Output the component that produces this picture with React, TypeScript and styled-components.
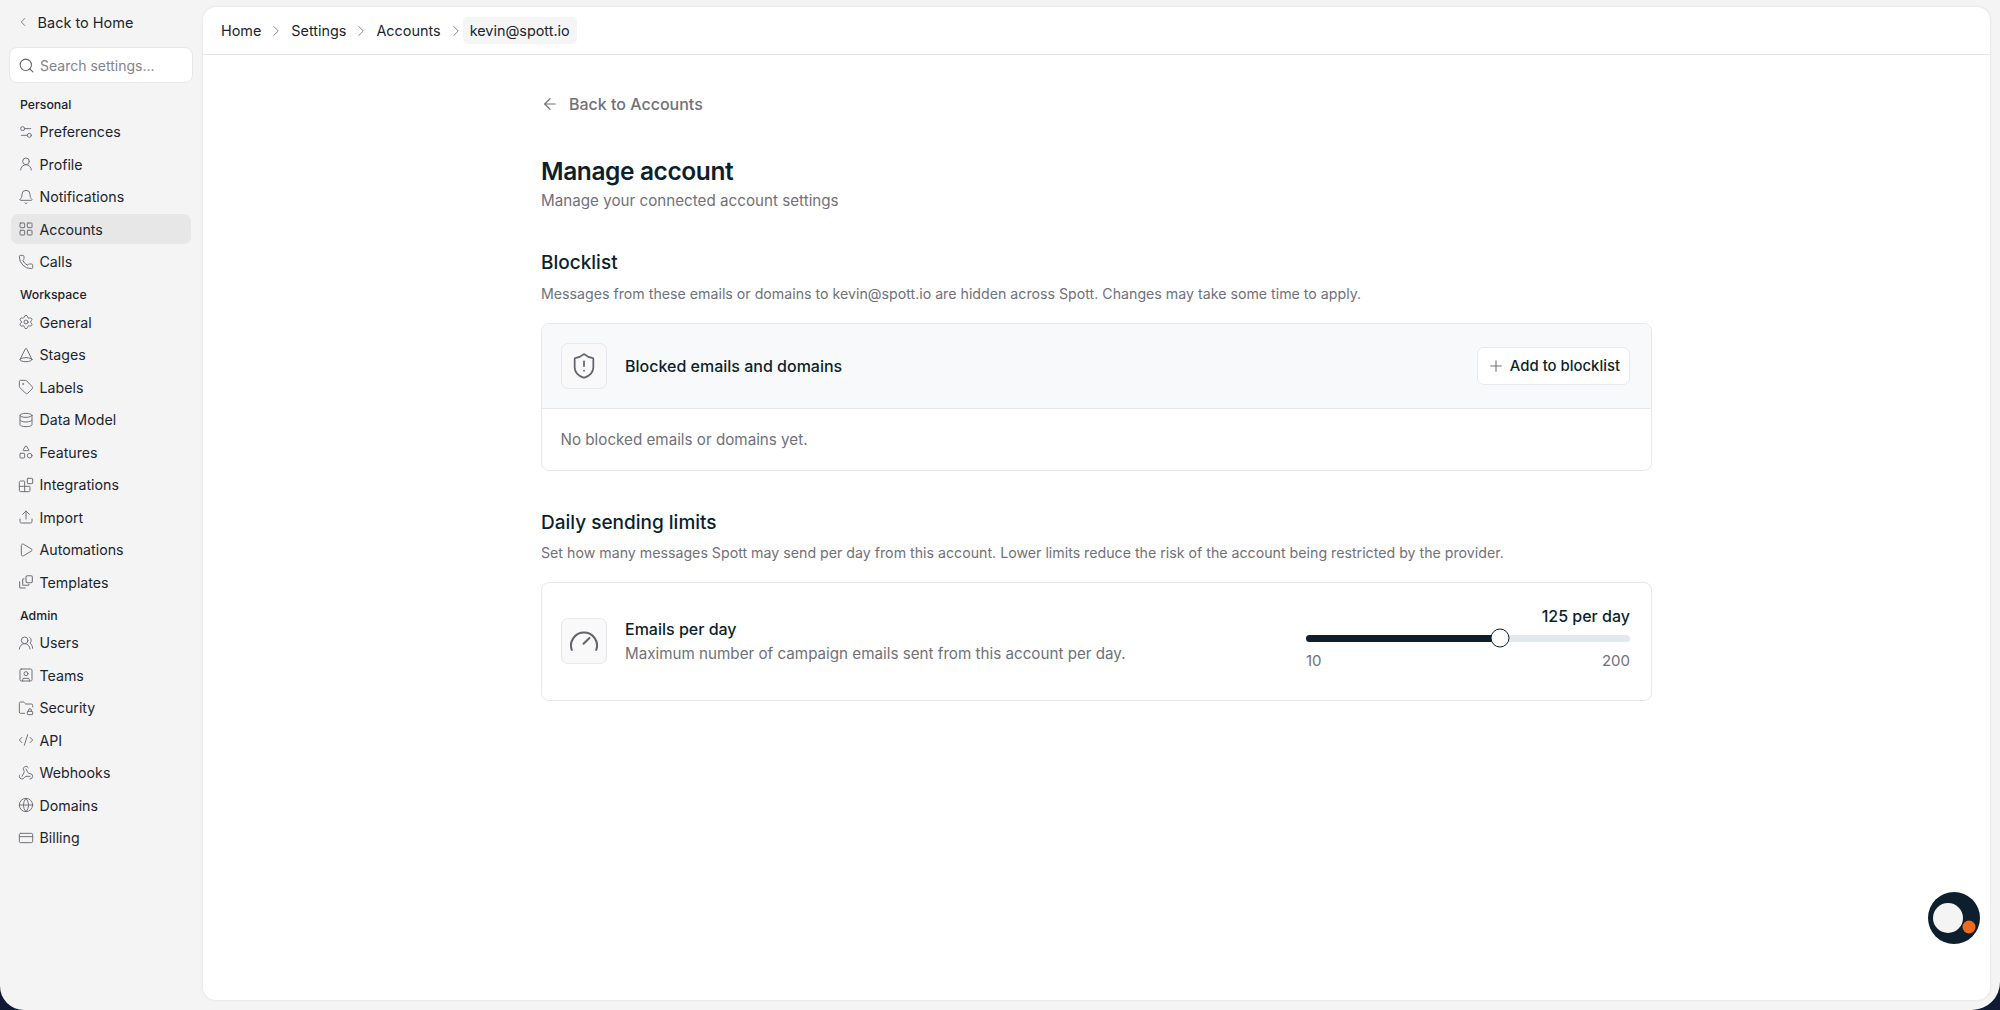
import { Fragment, ReactNode } from "react";
import styled, { createGlobalStyle } from "styled-components";
import {
  ArrowLeft,
  Bell,
  Blocks,
  ChevronLeft,
  ChevronRight,
  CodeXml,
  Cone,
  CreditCard,
  Database,
  FolderLock,
  Globe,
  LayoutGrid,
  Phone,
  Play,
  Plus,
  Search,
  Settings,
  Settings2,
  Shapes,
  ShieldAlert,
  SquareUser,
  Tag,
  Upload,
  UserRound,
  UsersRound,
  Webhook,
} from "lucide-react";

const GlobalStyle = createGlobalStyle`
  html, body {
    margin: 0;
    padding: 0;
    background: #101a33;
  }
  * {
    box-sizing: border-box;
  }
  body {
    font-family: Inter, "Liberation Sans", sans-serif;
    color: #1b2530;
    -webkit-font-smoothing: antialiased;
  }
`;

const Shell = styled.div`
  display: flex;
  width: 2000px;
  height: 1010px;
  overflow: hidden;
  background: #f4f4f5;
  border-radius: 0 0 28px 24px;
`;

const Sidebar = styled.aside`
  display: flex;
  flex-direction: column;
  width: 203px;
  flex-shrink: 0;
  padding: 12px 10px 0 9px;
`;

const BackHome = styled.div`
  display: flex;
  align-items: center;
  gap: 8px;
  height: 20px;
  padding-left: 6.5px;
  font-size: 14.5px;
  color: #1b2530;
  svg {
    color: #71717a;
  }
`;

const SearchBox = styled.div`
  display: flex;
  align-items: center;
  gap: 5px;
  height: 36px;
  margin: 15px 0 5.5px;
  padding-left: 8px;
  background: #fff;
  border: 1px solid #e7e7e9;
  border-radius: 8px;
  font-size: 14px;
  color: #83838b;
  svg {
    color: #63636b;
  }
`;

const NavList = styled.nav`
  display: flex;
  flex-direction: column;
  gap: 2.5px;
  margin: 0 2px 0 2px;
`;

const NavLabel = styled.div`
  height: 25.5px;
  padding: 6px 0 0 9px;
  font-size: 12.3px;
  line-height: 19.5px;
  font-weight: 500;
  color: #1b2530;
`;

const NavRow = styled.div<{ $active?: boolean }>`
  display: flex;
  align-items: center;
  gap: 6px;
  height: 30px;
  padding-left: 6.5px;
  border-radius: 7px;
  font-size: 14.2px;
  color: #1b2530;
  background: ${(props) => (props.$active ? "#e7e7e8" : "transparent")};
  svg {
    flex-shrink: 0;
    color: #71717a;
  }
`;

const Panel = styled.main`
  display: flex;
  flex-direction: column;
  flex: 1;
  margin: 7px 10px 10px 0;
  background: #fff;
  border-radius: 13px;
  box-shadow: 0 0 3px rgba(0, 0, 0, 0.1);
`;

const TopBar = styled.header`
  display: flex;
  align-items: center;
  height: 48px;
  padding-left: 18px;
  border-bottom: 1px solid #e6e6e8;
`;

const Crumb = styled.span<{ $current?: boolean }>`
  margin-left: ${(props) => (props.$current ? "-8px" : "0")};
  padding: ${(props) => (props.$current ? "5px 7px" : "0")};
  border-radius: 5px;
  font-size: 14.4px;
  color: #1b2530;
  background: ${(props) => (props.$current ? "#f5f5f6" : "transparent")};
`;

const CrumbSep = styled.span`
  display: flex;
  margin: 0 6px;
  color: #85858c;
`;

const Content = styled.div`
  width: 1111px;
  margin: 0 auto;
  padding-top: 37px;
`;

const BackLink = styled.div`
  display: flex;
  align-items: center;
  gap: 10px;
  height: 24px;
  font-size: 16px;
  font-weight: 500;
  color: #71717a;
`;

const Title = styled.h1`
  margin: 37.5px 0 0;
  font-size: 24.5px;
  line-height: 34px;
  font-weight: 600;
  letter-spacing: -0.4px;
  color: #0d1f2d;
`;

const Subtitle = styled.p`
  margin: 2px 0 0;
  font-size: 15.2px;
  line-height: 22px;
  color: #71717a;
`;

const Section = styled.section<{ $gap: number }>`
  margin-top: ${(props) => props.$gap}px;
`;

const SectionTitle = styled.h2`
  margin: 0;
  font-size: 19px;
  line-height: 26px;
  font-weight: 500;
  color: #0d1f2d;
`;

const SectionText = styled.p`
  margin: 6.5px 0 0;
  font-size: 14.2px;
  line-height: 22px;
  color: #71717a;
`;

const Card = styled.div<{ $top: number }>`
  margin-top: ${(props) => props.$top}px;
  border: 1px solid #e6e8eb;
  border-radius: 8px;
  overflow: hidden;
`;

const CardHeader = styled.div`
  display: flex;
  align-items: center;
  justify-content: space-between;
  height: 85px;
  padding: 0 21px 0 19px;
  background: #f8f9fa;
  border-bottom: 1px solid #e6e8eb;
`;

const CardLead = styled.div`
  display: flex;
  align-items: center;
  gap: 18px;
`;

const IconBox = styled.div`
  display: flex;
  align-items: center;
  justify-content: center;
  width: 46px;
  height: 46px;
  background: #f9f9fa;
  border: 1px solid #e6e8eb;
  border-radius: 7px;
  color: #63636b;
`;

const CardTitle = styled.div`
  font-size: 16px;
  line-height: 24px;
  font-weight: 500;
  color: #0d1f2d;
`;

const AddButton = styled.button`
  display: flex;
  align-items: center;
  gap: 4.5px;
  height: 38px;
  padding: 0 9px;
  background: #fff;
  border: 1px solid #e6e8eb;
  border-radius: 7px;
  font-family: inherit;
  font-size: 14.9px;
  font-weight: 500;
  color: #0d1f2d;
  svg {
    color: #71717a;
  }
`;

const CardEmpty = styled.div`
  height: 61px;
  padding: 20px 0 0 18.5px;
  font-size: 15.2px;
  line-height: 22px;
  color: #71717a;
`;

const LimitRow = styled.div`
  display: flex;
  align-items: center;
  justify-content: space-between;
  height: 117px;
  padding: 0 21px 0 19px;
`;

const LimitText = styled.div`
  display: flex;
  flex-direction: column;
  gap: 1px;
`;

const LimitHint = styled.div`
  font-size: 15.2px;
  line-height: 24px;
  color: #71717a;
`;

const SliderWrap = styled.div`
  display: flex;
  flex-direction: column;
  width: 324px;
  padding-bottom: 7px;
`;

const SliderValue = styled.div`
  text-align: right;
  font-size: 16px;
  line-height: 24px;
  font-weight: 500;
  color: #0d1f2d;
`;

const SliderTrack = styled.div`
  position: relative;
  height: 7px;
  margin-top: 7px;
  background: #e2e8f0;
  border-radius: 4px;
`;

const SliderFill = styled.div`
  height: 100%;
  background: #0d1f2d;
  border-radius: 4px;
`;

const SliderThumb = styled.div`
  position: absolute;
  top: 50%;
  width: 19px;
  height: 19px;
  background: #fff;
  border: 1.5px solid #0d1f2d;
  border-radius: 50%;
  transform: translate(-50%, -50%);
`;

const SliderScale = styled.div`
  display: flex;
  justify-content: space-between;
  margin-top: 8px;
  font-size: 15px;
  line-height: 22px;
  color: #71717a;
`;

const ChatBubble = styled.svg`
  position: fixed;
  left: 1928px;
  top: 892px;
`;

const GaugeIcon = () => (
  <svg width="28" height="28" viewBox="0 0 28 28" fill="none" stroke="currentColor" strokeWidth="2" strokeLinecap="round">
    <path d="M1.8 23A13 13 0 1 1 26.2 23" />
    <path d="M13.5 16.7L19.5 11" />
  </svg>
);

const TemplatesIcon = () => (
  <svg width="16" height="16" viewBox="0 0 24 24" fill="none" stroke="currentColor" strokeWidth="1.6" strokeLinecap="round" strokeLinejoin="round">
    <rect x="12" y="2.5" width="9.5" height="10.5" rx="2" />
    <path d="M9 7H8.5A1.5 1.5 0 0 0 7 8.5v7A1.5 1.5 0 0 0 8.5 17H15a1.5 1.5 0 0 0 1.5-1.5" />
    <path d="M2.5 11.5v8A1.5 1.5 0 0 0 4 21h7" />
  </svg>
);

const ic = { size: 16, strokeWidth: 1.5 };

type NavEntry = { label: string; icon: ReactNode; active?: boolean };
type NavGroup = { title: string; items: NavEntry[] };

const groups: NavGroup[] = [
  {
    title: "Personal",
    items: [
      { label: "Preferences", icon: <Settings2 {...ic} /> },
      { label: "Profile", icon: <UserRound {...ic} /> },
      { label: "Notifications", icon: <Bell {...ic} /> },
      { label: "Accounts", icon: <LayoutGrid {...ic} />, active: true },
      { label: "Calls", icon: <Phone {...ic} /> },
    ],
  },
  {
    title: "Workspace",
    items: [
      { label: "General", icon: <Settings {...ic} /> },
      { label: "Stages", icon: <Cone {...ic} /> },
      { label: "Labels", icon: <Tag {...ic} /> },
      { label: "Data Model", icon: <Database {...ic} /> },
      { label: "Features", icon: <Shapes {...ic} /> },
      { label: "Integrations", icon: <Blocks {...ic} /> },
      { label: "Import", icon: <Upload {...ic} /> },
      { label: "Automations", icon: <Play {...ic} /> },
      { label: "Templates", icon: <TemplatesIcon /> },
    ],
  },
  {
    title: "Admin",
    items: [
      { label: "Users", icon: <UsersRound {...ic} /> },
      { label: "Teams", icon: <SquareUser {...ic} /> },
      { label: "Security", icon: <FolderLock {...ic} /> },
      { label: "API", icon: <CodeXml {...ic} /> },
      { label: "Webhooks", icon: <Webhook {...ic} /> },
      { label: "Domains", icon: <Globe {...ic} /> },
      { label: "Billing", icon: <CreditCard {...ic} /> },
    ],
  },
];

const crumbs = ["Home", "Settings", "Accounts"];

const sendLimit = { min: 10, max: 200, thumb: 60 };

export default function App() {
  return (
    <>
      <GlobalStyle />
      <Shell>
        <Sidebar>
          <BackHome>
            <ChevronLeft size={14} strokeWidth={1.6} />
            Back to Home
          </BackHome>
          <SearchBox>
            <Search size={17} strokeWidth={1.5} />
            Search settings...
          </SearchBox>
          <NavList>
            {groups.map((group) => (
              <Fragment key={group.title}>
                <NavLabel>{group.title}</NavLabel>
                {group.items.map((item) => (
                  <NavRow key={item.label} $active={item.active}>
                    {item.icon}
                    {item.label}
                  </NavRow>
                ))}
              </Fragment>
            ))}
          </NavList>
        </Sidebar>
        <Panel>
          <TopBar>
            {crumbs.map((crumb) => (
              <Fragment key={crumb}>
                <Crumb>{crumb}</Crumb>
                <CrumbSep>
                  <ChevronRight size={18} strokeWidth={1.3} />
                </CrumbSep>
              </Fragment>
            ))}
            <Crumb $current>kevin@spott.io</Crumb>
          </TopBar>
          <Content>
            <BackLink>
              <ArrowLeft size={18} strokeWidth={1.6} />
              Back to Accounts
            </BackLink>
            <Title>Manage account</Title>
            <Subtitle>Manage your connected account settings</Subtitle>
            <Section $gap={38.5}>
              <SectionTitle>Blocklist</SectionTitle>
              <SectionText>
                Messages from these emails or domains to kevin@spott.io are hidden across Spott. Changes may take some time to apply.
              </SectionText>
              <Card $top={18.5}>
                <CardHeader>
                  <CardLead>
                    <IconBox>
                      <ShieldAlert size={28} strokeWidth={1.5} />
                    </IconBox>
                    <CardTitle>Blocked emails and domains</CardTitle>
                  </CardLead>
                  <AddButton>
                    <Plus size={18} strokeWidth={1.5} />
                    Add to blocklist
                  </AddButton>
                </CardHeader>
                <CardEmpty>No blocked emails or domains yet.</CardEmpty>
              </Card>
            </Section>
            <Section $gap={38.75}>
              <SectionTitle>Daily sending limits</SectionTitle>
              <SectionText>
                Set how many messages Spott may send per day from this account. Lower limits reduce the risk of the account being restricted by the provider.
              </SectionText>
              <Card $top={17.5}>
                <LimitRow>
                  <CardLead>
                    <IconBox>
                      <GaugeIcon />
                    </IconBox>
                    <LimitText>
                      <CardTitle>Emails per day</CardTitle>
                      <LimitHint>Maximum number of campaign emails sent from this account per day.</LimitHint>
                    </LimitText>
                  </CardLead>
                  <SliderWrap>
                    <SliderValue>125 per day</SliderValue>
                    <SliderTrack>
                      <SliderFill style={{ width: `${sendLimit.thumb}%` }} />
                      <SliderThumb style={{ left: `${sendLimit.thumb}%` }} />
                    </SliderTrack>
                    <SliderScale>
                      <span>{sendLimit.min}</span>
                      <span>{sendLimit.max}</span>
                    </SliderScale>
                  </SliderWrap>
                </LimitRow>
              </Card>
            </Section>
          </Content>
        </Panel>
      </Shell>
      <ChatBubble width="52" height="52" viewBox="0 0 52 52">
        <circle cx="26" cy="26" r="26" fill="#0d1f2d" />
        <circle cx="20" cy="26" r="15" fill="#f4f4f5" />
        <circle cx="41" cy="35" r="6.5" fill="#ee6b1e" />
      </ChatBubble>
    </>
  );
}
